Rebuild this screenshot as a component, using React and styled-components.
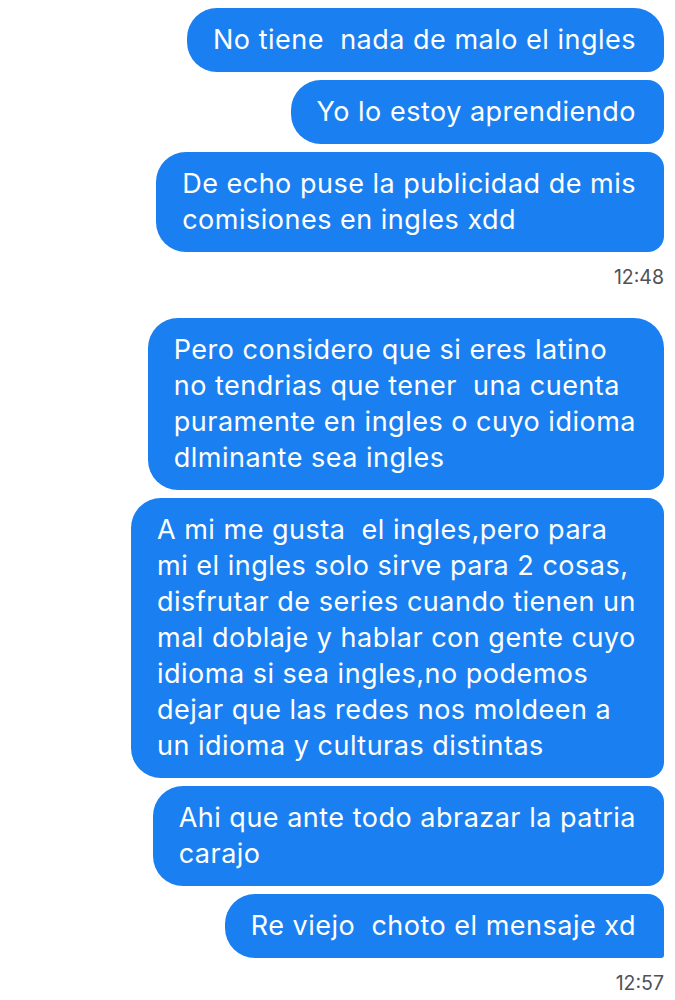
import React from 'react';
import styled, { createGlobalStyle } from 'styled-components';

const GlobalStyle = createGlobalStyle`
  html, body {
    margin: 0;
    padding: 0;
    background: #ffffff;
  }
  body {
    font-family: Inter, "Noto Sans", sans-serif;
  }
`;

const groups = [
  {
    time: '12:48',
    messages: [
      'No tiene  nada de malo el ingles',
      'Yo lo estoy aprendiendo',
      'De echo puse la publicidad de mis\ncomisiones en ingles xdd',
    ],
  },
  {
    time: '12:57',
    messages: [
      'Pero considero que si eres latino\nno tendrias que tener  una cuenta\npuramente en ingles o cuyo idioma\ndlminante sea ingles',
      'A mi me gusta  el ingles,pero para\nmi el ingles solo sirve para 2 cosas,\ndisfrutar de series cuando tienen un\nmal doblaje y hablar con gente cuyo\nidioma si sea ingles,no podemos\ndejar que las redes nos moldeen a\nun idioma y culturas distintas',
      'Ahi que ante todo abrazar la patria\ncarajo',
      'Re viejo  choto el mensaje xd',
    ],
  },
];

const Chat = styled.div`
  display: flex;
  flex-direction: column;
  padding: 8px 11px 0 0;
  border-top: 2px solid #eef6fb;
  margin-top: -2px;
`;

const Group = styled.div`
  display: flex;
  flex-direction: column;
  align-items: flex-end;
  gap: 8px;
  margin-bottom: ${p => (p.$last ? '0' : '29px')};
`;

const Bubble = styled.div`
  background: #1a80f1;
  color: #ffffff;
  font-size: 27px;
  letter-spacing: 0.5px;
  line-height: 36px;
  padding: 14px 28px 14px 26px;
  white-space: pre-wrap;
  border-radius: 30px;
  border-top-right-radius: ${p => (p.$first ? '30px' : '16px')};
  border-bottom-right-radius: ${p => (p.$tail ? '3px' : '16px')};
`;

const Time = styled.div`
  align-self: flex-end;
  margin-top: 5px;
  color: #505257;
  font-size: 19.5px;
  line-height: 24px;
`;

export default function App() {
  return (
    <>
      <GlobalStyle />
      <Chat>
        {groups.map((g, gi) => (
          <Group key={g.time} $last={gi === groups.length - 1}>
            {g.messages.map((m, i) => (
              <Bubble
                key={i}
                $first={i === 0}
                $tail={gi === groups.length - 1 && i === g.messages.length - 1}
              >
                {m}
              </Bubble>
            ))}
            <Time>{g.time}</Time>
          </Group>
        ))}
      </Chat>
    </>
  );
}
